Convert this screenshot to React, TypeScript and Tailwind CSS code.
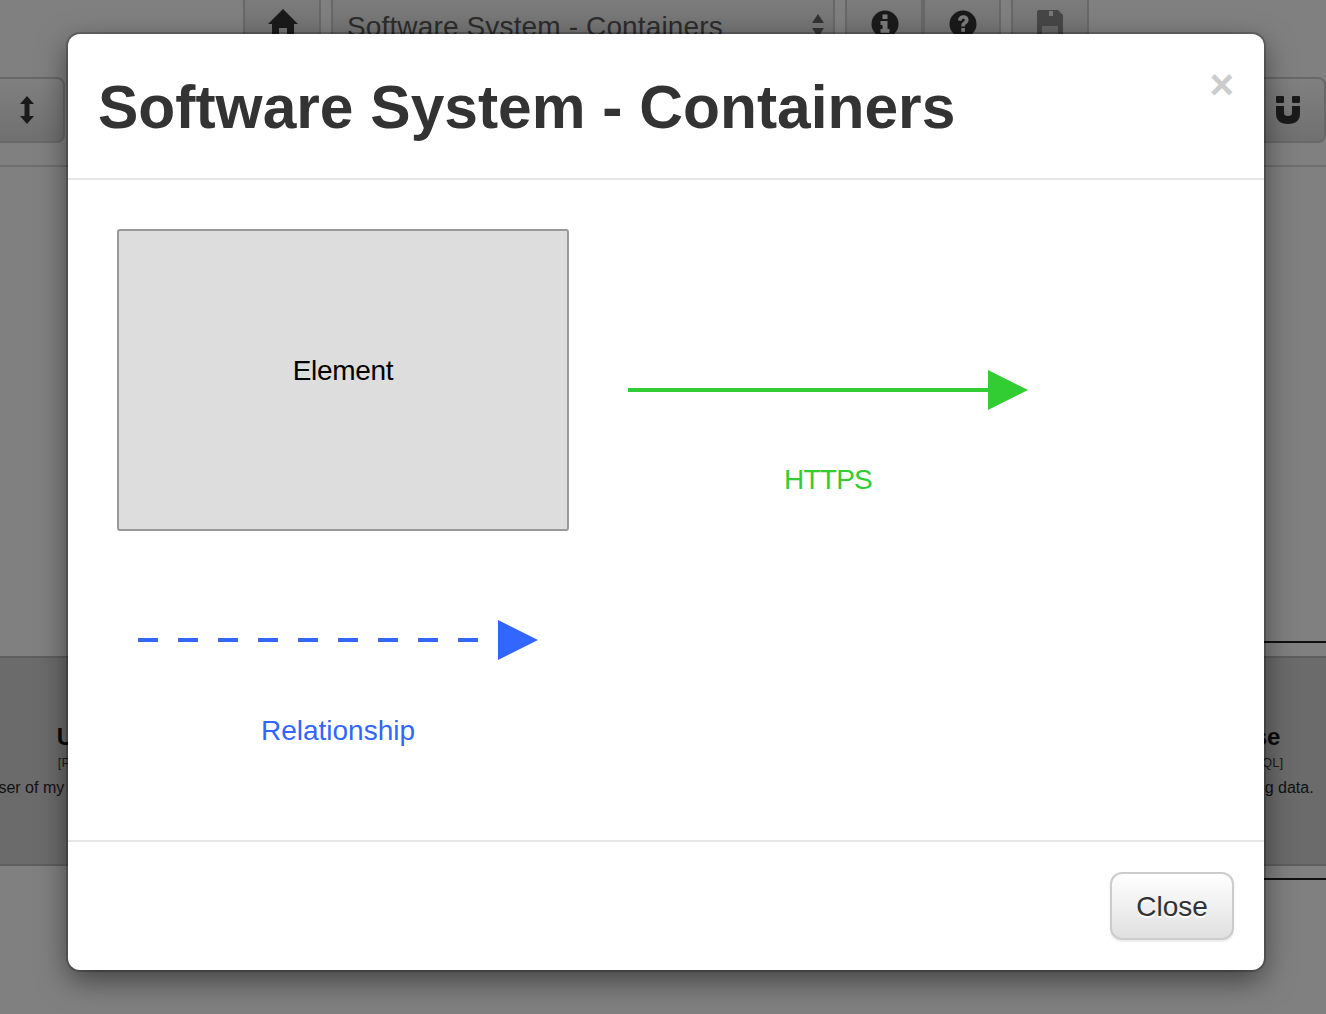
import React from "react";

const font = "font-['Liberation_Sans',Arial,sans-serif]";
const btn = "w-[78px] h-[66px] flex items-center justify-center border-2 border-[#686868] rounded-[8px] bg-gradient-to-b from-[#808080] to-[#707070]";
const topBtn = "w-[78px] h-[70px] -mt-[20px] flex items-start justify-center border-2 border-[#686868] rounded-[8px] bg-gradient-to-b from-[#808080] to-[#707070]";

function HomeIcon() {
  return (
    <svg width="30" height="28" viewBox="0 0 30 28" className="mt-[27px] ml-[1px]" fill="#1a1a1a">
      <path d="M15 0 L30 15 L26 15 L26 28 L19 28 L19 19 L11 19 L11 28 L4 28 L4 15 L0 15 Z" />
    </svg>
  );
}

function InfoIcon() {
  return (
    <svg width="28" height="28" viewBox="0 0 28 28" className="mt-[28px] ml-[1px]">
      <circle cx="14" cy="14" r="13.5" fill="#1a1a1a" />
      <rect x="11.5" y="4.5" width="5" height="4.5" fill="#7c7c7c" />
      <path d="M9.5 11 H16.5 V19 H18.5 V23 H9.5 V19 H11.5 V15 H9.5 Z" fill="#7c7c7c" />
    </svg>
  );
}

function QuestionIcon() {
  return (
    <svg width="28" height="28" viewBox="0 0 28 28" className="mt-[28px] ml-[1px]">
      <circle cx="14" cy="14" r="13.5" fill="#1a1a1a" />
      <path d="M8.8 10.2 C9.4 6.8 11.6 5.3 14.3 5.3 C17.4 5.3 19.6 7.2 19.6 10 C19.6 12.2 18.3 13.2 16.9 14.2 C16.2 14.7 16 15.2 16 16.4 H12.2 C12.2 14 12.8 13 14.2 12 C15.2 11.3 15.8 10.9 15.8 10.1 C15.8 9.3 15.2 8.8 14.3 8.8 C13.3 8.8 12.7 9.4 12.4 10.9 Z" fill="#7c7c7c" />
      <rect x="12.2" y="18" width="3.8" height="3.8" fill="#7c7c7c" />
    </svg>
  );
}

function SaveIcon() {
  return (
    <svg width="26" height="28" viewBox="0 0 26 28" className="mt-[28px]">
      <path d="M2 0 H21 L26 5 V28 H0 V2 Q0 0 2 0 Z" fill="#474747" />
      <rect x="12" y="1" width="4" height="5" fill="#787878" />
      <rect x="5" y="16" width="16" height="12" fill="#666666" />
    </svg>
  );
}

function ResizeIcon() {
  return (
    <svg width="14" height="28" viewBox="0 0 14 28" className="ml-[1px]" fill="#1a1a1a">
      <path d="M7 0 L14 8 H9.5 V20 H14 L7 28 L0 20 H4.5 V8 H0 Z" />
    </svg>
  );
}

function MagnetIcon() {
  return (
    <svg width="24" height="28" viewBox="0 0 24 28" className="ml-[1px]" fill="#1a1a1a">
      <rect x="0" y="0" width="8" height="7" rx="1" />
      <rect x="16" y="0" width="8" height="7" rx="1" />
      <path d="M0 10 H8 V17 Q8 20 12 20 Q16 20 16 17 V10 H24 V17 Q24 28 12 28 Q0 28 0 17 Z" />
    </svg>
  );
}

function ElementBox({ title, tech, desc, titleClass }: { title: string; tech: string; desc: string; titleClass?: string }) {
  return (
    <div className="w-[450px] h-[210px] bg-[#6b6b6b] border-y-2 border-[#5e5e5e] flex flex-col items-center pt-[64px] text-[#0a0a0a]">
      <div className={`text-[24px] leading-[30px] font-bold whitespace-nowrap ${titleClass ?? ""}`}>{title}</div>
      <div className="text-[13px] leading-[18px] mt-[2px] text-[#1c1c1c] whitespace-nowrap">{tech}</div>
      <div className="text-[16px] leading-[20px] mt-[6px] text-[#111111] whitespace-nowrap">{desc}</div>
    </div>
  );
}

function Page() {
  return (
    <div className="relative w-[1326px] h-[1014px] overflow-hidden bg-[#808080] flex flex-col">
      <div className="h-[50px] flex pl-[243px] gap-[10px]">
        <div className={topBtn}><HomeIcon /></div>
        <div className="w-[504px] h-[70px] -mt-[20px] flex items-start justify-between border-2 border-[#686868] rounded-[8px] bg-gradient-to-b from-[#808080] to-[#707070] pl-[14px] pr-[9px]">
          <span className="text-[28px] leading-[32px] tracking-[0.14px] text-[#2c2c2c] mt-[29px] whitespace-nowrap">Software System - Containers</span>
          <svg width="12" height="24" viewBox="0 0 12 24" className="mt-[32px]" fill="#333333">
            <path d="M6 0 L12 9 H0 Z" />
            <path d="M0 14 H12 L6 23 Z" />
          </svg>
        </div>
        <div className="flex">
          <div className={topBtn}><InfoIcon /></div>
          <div className={topBtn}><QuestionIcon /></div>
        </div>
        <div className={topBtn}><SaveIcon /></div>
      </div>
      <div className="mt-[27px] -ml-[13px] flex justify-between">
        <div className={btn}><ResizeIcon /></div>
        <div className={btn}><MagnetIcon /></div>
      </div>
      <div className="mt-[22px] h-[2px] bg-[#6e6e6e] shrink-0" />
      <div className="mt-[489px] w-[1594px] -ml-[143px] flex justify-between shrink-0">
        <ElementBox title="User" tech="[Person]" desc="A user of my software system." titleClass="ml-[3px]" />
        <ElementBox title="Database" tech="[Container: MySQL]" desc="Stores all incoming data." titleClass="ml-[2px]" />
      </div>
      <div className="absolute left-[1000px] top-[641px] w-[326px] h-[2px] bg-[#101010]" />
      <div className="absolute left-[1000px] top-[878px] w-[326px] h-[2px] bg-[#101010]" />
    </div>
  );
}

function Arrow({ color, dashed }: { color: string; dashed?: boolean }) {
  return (
    <svg width="400" height="40" viewBox="0 0 400 40" className="block">
      <line x1="0" y1="20" x2={dashed ? 340 : 360} y2="20" stroke={color} strokeWidth="4" strokeDasharray={dashed ? "20 20" : undefined} />
      <polygon points="360,0 400,20 360,40" fill={color} />
    </svg>
  );
}

export default function App() {
  return (
    <div className={`relative w-[1326px] h-[1014px] overflow-hidden ${font}`}>
      <Page />
      <div className="absolute left-[68px] top-[34px] w-[1196px] h-[936px] bg-white rounded-[12px] shadow-[0_0_0_2px_rgba(0,0,0,0.2),0_10px_30px_rgba(0,0,0,0.5)] flex flex-col">
        <div className="relative h-[146px] shrink-0 border-b-2 border-[#e5e5e5] px-[30px] pt-[31px]">
          <h4 className="text-[60.5px] leading-[84px] font-bold text-[#333333] whitespace-nowrap">Software System - Containers</h4>
          <button className="absolute right-[30px] top-[26px] text-[42px] leading-[50px] font-bold text-[#cccccc]">×</button>
        </div>
        <div className="flex-1 pl-[49px] pt-[49px]">
          <div className="flex">
            <div className="w-[452px] h-[302px] pb-[18px] bg-[#dddddd] border-2 border-[#999999] rounded-[3px] flex items-center justify-center text-[28px] tracking-[-0.3px] text-black">
              Element
            </div>
            <div className="ml-[59px] mt-[141px] w-[400px]">
              <Arrow color="#32cd32" />
              <div className="mt-[50px] text-[28px] leading-[40px] tracking-[-0.8px] text-center text-[#32cd32]">HTTPS</div>
            </div>
          </div>
          <div className="ml-[21px] mt-[89px] w-[400px]">
            <Arrow color="#3366ff" dashed />
            <div className="mt-[51px] text-[28px] leading-[40px] text-center text-[#3366ff]">Relationship</div>
          </div>
        </div>
        <div className="h-[130px] shrink-0 border-t-2 border-[#e5e5e5] p-[30px] flex justify-end">
          <button className="w-[124px] h-[68px] pt-[2px] border-2 border-[#cccccc] rounded-[12px] bg-gradient-to-b from-white to-[#e0e0e0] text-[28px] text-[#333333] [text-shadow:0_2px_0_#fff] shadow-[0_2px_2px_rgba(0,0,0,0.08)]">
            Close
          </button>
        </div>
      </div>
    </div>
  );
}
